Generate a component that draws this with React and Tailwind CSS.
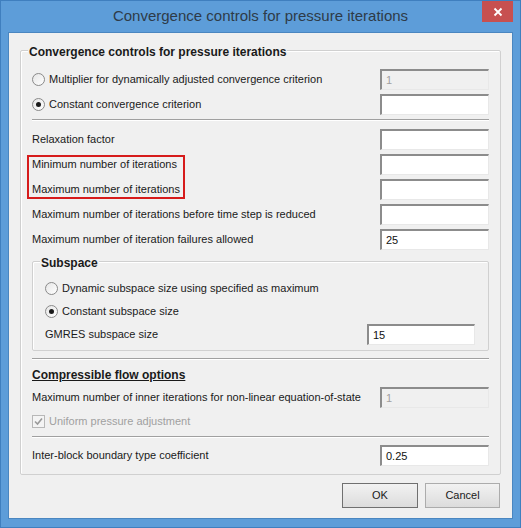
import React from "react";

const font = { fontFamily: '"Liberation Sans", Arial, sans-serif' };

function Input({ value = "", disabled = false, w = "w-[109px]" }) {
  return (
    <div
      className={`${w} h-[21px] flex items-center pl-[4px] text-[11px] border-t-2 border-l-2 border-t-[#8c8c8c] border-l-[#8c8c8c] border-r border-b border-r-[#e8e8e8] border-b-[#e8e8e8] ${
        disabled ? "bg-[#f0f0f0] text-[#a0a0a0]" : "bg-white text-[#111]"
      }`}
    >
      {value}
    </div>
  );
}

function Radio({ checked }) {
  return (
    <div className="w-[13px] h-[13px] rounded-full border border-[#8a8a8a] bg-gradient-to-br from-[#e6e6e6] to-white flex items-center justify-center shrink-0">
      {checked && <div className="w-[5px] h-[5px] rounded-full bg-[#1a1a1a]" />}
    </div>
  );
}

function Row({ label, value, disabled, h = "h-[25px]", children }) {
  return (
    <div className={`${h} flex items-center justify-between`}>
      {children || <span>{label}</span>}
      <Input value={value} disabled={disabled} />
    </div>
  );
}

function Sep() {
  return <div className="h-[2px] border-t border-t-[#a0a0a0] border-b border-b-white" />;
}

export default function App() {
  return (
    <div
      className="w-[521px] h-[528px] bg-[#5d9dd9] relative border border-[#3f7fbf] flex flex-col text-[11px] text-[#1a1a1a]"
      style={font}
    >
      <div className="h-[31px] flex items-center justify-center text-[15px] text-[#2e3b48]">
        Convergence controls for pressure iterations
      </div>
      <div className="absolute top-0 right-[7px] w-[31px] h-[21px] bg-[#c75050] flex items-center justify-center">
        <svg width="10" height="10" viewBox="0 0 10 10">
          <path d="M1.5 1.5 L8.5 8.5 M8.5 1.5 L1.5 8.5" stroke="white" strokeWidth="1.8" />
        </svg>
      </div>
      <div className="mx-[7px] h-[487px] bg-[#f0f0f0] border border-[#4a86c0] flex flex-col pl-[11px] pr-[12px] pt-[17px]">
        <div className="relative border border-[#d0d0d0] rounded-[2px] shadow-[inset_1px_1px_0_#fff] w-[481px] h-[425px] px-[11px] pt-[16px]">
          <div className="absolute -top-[8px] left-[7px] px-[1px] bg-[#f0f0f0] font-bold text-[12px]">
            Convergence controls for pressure iterations
          </div>
          <Row value="1" disabled>
            <div className="flex items-center gap-[4px]">
              <Radio />
              <span>Multiplier for dynamically adjusted convergence criterion</span>
            </div>
          </Row>
          <Row value="">
            <div className="flex items-center gap-[4px]">
              <Radio checked />
              <span>Constant convergence criterion</span>
            </div>
          </Row>
          <div className="mt-[2px]">
            <Sep />
          </div>
          <div className="mt-[6px]">
            <Row label="Relaxation factor" />
            <div className="relative">
              <div className="absolute left-[-5px] top-[3px] w-[158px] h-[44px] border-2 border-[#d61b1b]" />
              <Row label="Minimum number of iterations" />
              <Row label="Maximum number of iterations" />
            </div>
            <Row label="Maximum number of iterations before time step is reduced" />
            <Row label="Maximum number of iteration failures allowed" value="25" />
          </div>
          <div className="relative mt-[9px] border border-[#d0d0d0] rounded-[2px] shadow-[inset_1px_1px_0_#fff] h-[90px] pl-[12px] pr-[13px] pt-[15px]">
            <div className="absolute -top-[8px] left-[7px] px-[1px] bg-[#f0f0f0] font-bold text-[12px]">
              Subspace
            </div>
            <div className="h-[23px] flex items-center gap-[4px]">
              <Radio />
              <span>Dynamic subspace size using specified as maximum</span>
            </div>
            <div className="h-[23px] flex items-center gap-[4px]">
              <Radio checked />
              <span>Constant subspace size</span>
            </div>
            <div className="h-[23px] flex items-center justify-between">
              <span>GMRES subspace size</span>
              <Input value="15" w="w-[108px]" />
            </div>
          </div>
          <div className="mt-[7px]">
            <Sep />
          </div>
          <div className="h-[20px] mt-[5px] flex items-center font-bold underline text-[12px]">
            Compressible flow options
          </div>
          <Row label="Maximum number of inner iterations for non-linear equation-of-state" value="1" disabled />
          <div className="h-[22px] flex items-center gap-[4px] text-[#a0a0a0]">
            <div className="w-[13px] h-[13px] border border-[#b8b8b8] bg-[#f4f4f4] flex items-center justify-center">
              <svg width="9" height="9" viewBox="0 0 9 9">
                <path d="M1 4.5 L3.5 7 L8 1.5" stroke="#9a9a9a" strokeWidth="1.6" fill="none" />
              </svg>
            </div>
            <span>Uniform pressure adjustment</span>
          </div>
          <div className="mt-[4px]">
            <Sep />
          </div>
          <div className="mt-[5px]">
            <Row label="Inter-block boundary type coefficient" value="0.25" />
          </div>
        </div>
        <div className="mt-[8px] flex justify-end gap-[7px]">
          <button className="w-[76px] h-[25px] border border-[#707070] bg-gradient-to-b from-[#f2f2f2] to-[#dcdcdc] text-[11px] text-[#1a1a1a]">
            OK
          </button>
          <button className="w-[75px] h-[25px] border border-[#acacac] bg-gradient-to-b from-[#f2f2f2] to-[#dcdcdc] text-[11px] text-[#1a1a1a]">
            Cancel
          </button>
        </div>
      </div>
    </div>
  );
}
